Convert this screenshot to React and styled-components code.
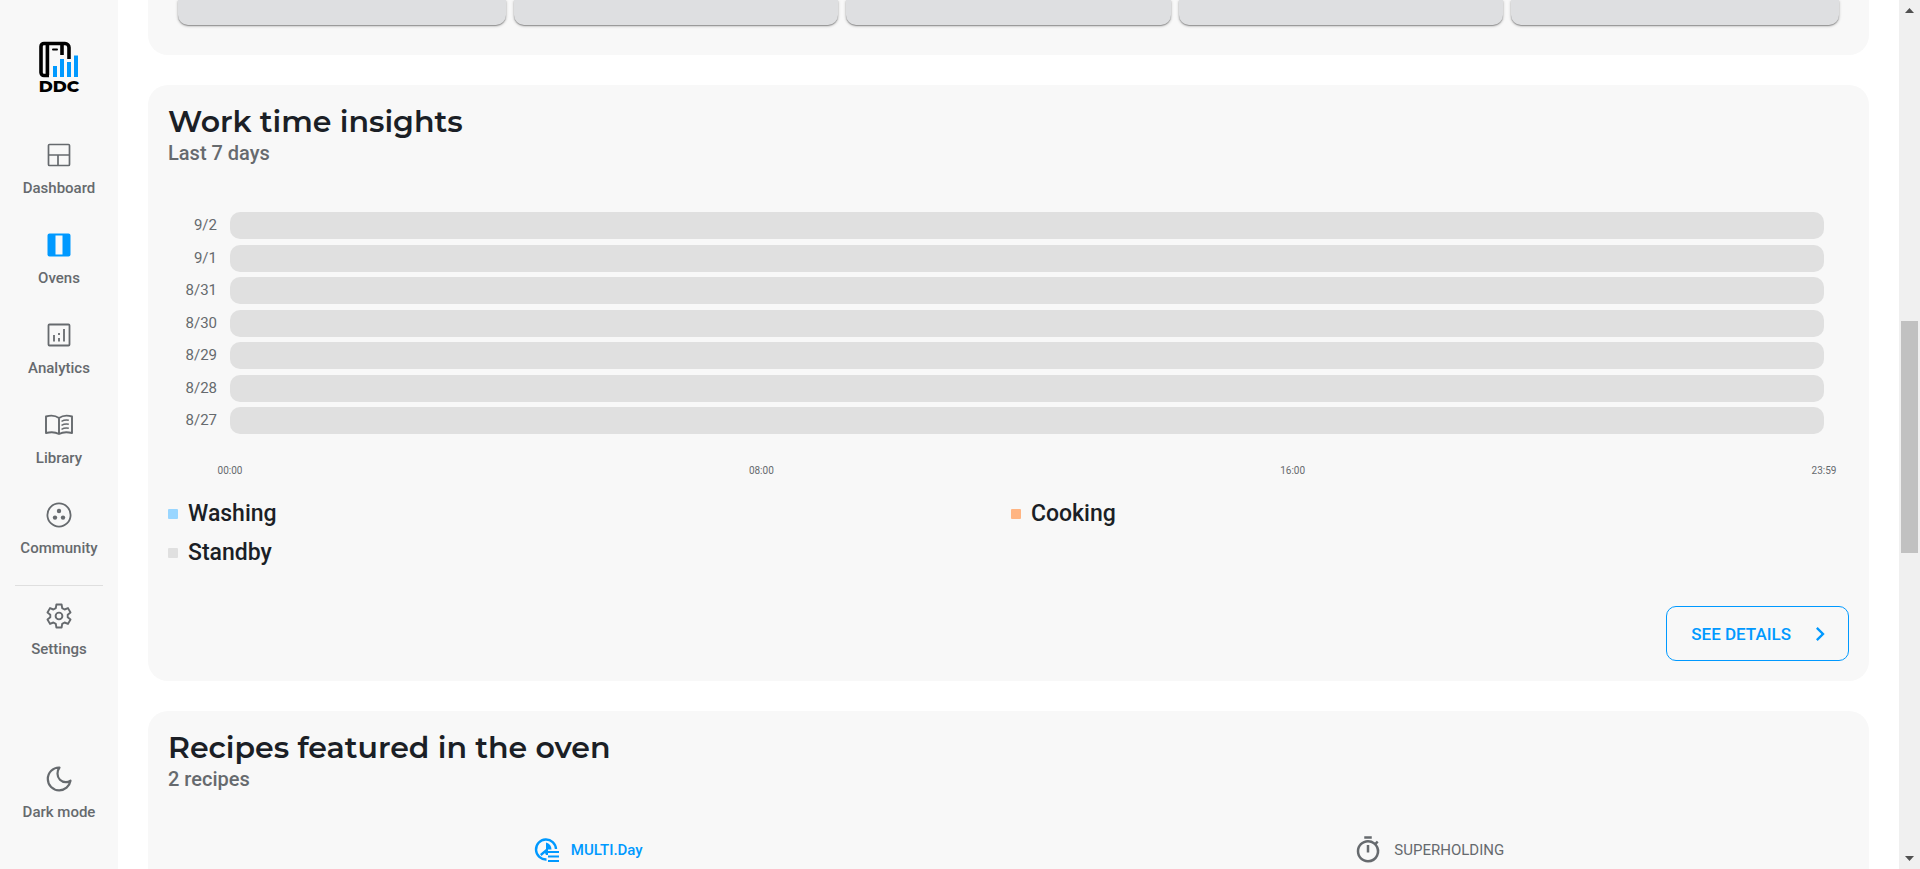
import React, { useState } from 'react';
import styled, { createGlobalStyle } from 'styled-components';
import { MdChevronRight, MdOutlineTimer } from 'react-icons/md';

const GlobalStyle = createGlobalStyle`
  * {
    box-sizing: border-box;
  }

  body {
    margin: 0;
    background: #fff;
    font-family: Roboto, "Liberation Sans", sans-serif;
    color: #1b1f26;
  }
`;

const Shell = styled.div`
  display: grid;
  grid-template-columns: 118px minmax(0, 1fr) 21px;
  height: 100vh;
  overflow: hidden;
`;

/* ---------- sidebar ---------- */

const Sidebar = styled.nav`
  display: flex;
  flex-direction: column;
  align-items: center;
  padding: 40px 15px;
  background: #f8f8f8;
`;

const Logo = styled.svg`
  flex: none;
  width: 42px;
  height: 58px;
  margin-bottom: 42px;
`;

const NavItem = styled.a`
  display: flex;
  flex-direction: column;
  align-items: center;
  gap: 8px;
  height: 90px;
  color: #666a6e;
  font-size: 15px;
  font-weight: 500;
  line-height: 20px;
  text-decoration: none;
  white-space: nowrap;

  svg {
    width: 30px;
    height: 30px;
    color: ${props => (props.$active ? '#0099ff' : '#666a6e')};
  }
`;

const Divider = styled.hr`
  flex: none;
  width: 100%;
  margin: -5px 0 15px;
  border: 0;
  border-top: 1px solid #dfdfdf;
`;

const ModeButton = styled(NavItem).attrs({ as: 'button', type: 'button' })`
  margin-top: auto;
  height: 65px;
  padding: 0;
  border: 0;
  background: none;
  font-family: inherit;
  cursor: pointer;
`;

/* ---------- content ---------- */

const Main = styled.main`
  display: flex;
  flex-direction: column;
  gap: 30px;
  padding: 0 30px;
  overflow: hidden;
`;

const Card = styled.section`
  flex: none;
  padding: 20px;
  border-radius: 20px;
  background: #f8f8f8;
`;

const TilesCard = styled(Card)`
  display: grid;
  grid-template-columns: repeat(5, 1fr);
  padding: 0 30px 30px;
  border-radius: 0 0 20px 20px;
`;

const Tile = styled.div`
  height: 25px;
  margin: 0 4px;
  border-radius: 0 0 10px 10px;
  background: #dedfe1;
  box-shadow: 0 1px 3px rgba(0, 0, 0, .3), 0 1px 1px rgba(0, 0, 0, .25);

  &:first-child {
    margin-left: 0;
  }

  &:last-child {
    margin-right: 0;
  }
`;

const Title = styled.h2`
  margin: 0 0 2px;
  font-family: Montserrat, Inter, sans-serif;
  font-size: 30px;
  font-weight: 600;
  line-height: 33px;
`;

const Subtitle = styled.p`
  margin: 0;
  color: #666a6e;
  font-size: 20px;
  font-weight: 500;
  line-height: 26px;
`;

const Chart = styled.div`
  display: flex;
  flex-direction: column;
  justify-content: space-between;
  height: 222px;
  margin-top: 46px;
  padding-right: 25px;
`;

const DayRow = styled.div`
  display: grid;
  grid-template-columns: 49px 1fr;
  column-gap: 13px;
  align-items: center;
  color: #666a6e;
  font-size: 15px;
  line-height: 27px;
  text-align: right;
`;

const DayBar = styled.div`
  height: 27px;
  border-radius: 10px;
  background: #e0e0e0;
`;

const Axis = styled.div`
  display: flex;
  justify-content: space-between;
  margin-top: 29px;
  padding: 0 5px 0 42px;
  color: #666a6e;
  font-size: 10px;
  line-height: 16px;

  span {
    width: 40px;
    text-align: center;
  }
`;

const Legend = styled.ul`
  display: grid;
  grid-template-columns: 1fr 1fr;
  column-gap: 5px;
  margin: 15px 0 0;
  padding: 0;
  list-style: none;
`;

const LegendItem = styled.li`
  display: flex;
  align-items: center;
  gap: 10px;
  font-size: 23px;
  font-weight: 500;
  line-height: 39px;

  &::before {
    content: '';
    width: 10px;
    height: 10px;
    border-radius: 1px;
    background: ${props => props.$color};
  }
`;

const CardActions = styled.div`
  display: flex;
  justify-content: flex-end;
  margin-top: 34px;
`;

const DetailsButton = styled.button`
  display: flex;
  align-items: center;
  gap: 15px;
  height: 55px;
  padding: 0 14px 0 24px;
  border: 1px solid #0099ff;
  border-radius: 10px;
  background: transparent;
  color: #0099ff;
  font-family: inherit;
  font-size: 17px;
  font-weight: 500;
  cursor: pointer;
`;

const Tabs = styled.div`
  display: grid;
  grid-template-columns: 1fr 1fr;
  margin-top: 30px;
`;

const Tab = styled.button`
  display: flex;
  align-items: center;
  justify-content: center;
  gap: 11px;
  height: 56px;
  padding: 0;
  border: 0;
  background: none;
  color: ${props => (props.$active ? '#0099ff' : '#666a6e')};
  font-family: inherit;
  font-size: 15px;
  font-weight: ${props => (props.$active ? 500 : 400)};
  cursor: pointer;
`;

/* ---------- scroll track ---------- */

const ScrollTrack = styled.div`
  display: grid;
  grid-template-rows: 21px 300fr 232fr 295fr 21px;
  justify-items: center;
  align-items: center;
  background: #f0f0f0;
`;

const ScrollThumb = styled.div`
  grid-row: 3;
  width: 17px;
  height: 100%;
  background: #c1c1c1;
`;

const ScrollArrow = styled.svg`
  grid-row: ${props => (props.$down ? 5 : 1)};
  width: 9px;
  height: 5px;
  fill: #505050;
`;

const StrokeIcon = ({ children, width = 2 }) => (
  <svg viewBox="0 0 30 30" fill="none" stroke="currentColor" strokeWidth={width} strokeLinejoin="round" aria-hidden="true">
    {children}
  </svg>
);

const DashboardIcon = () => (
  <StrokeIcon width={1.7}>
    <rect x="4.5" y="4.5" width="21" height="21" rx="1" />
    <path d="M4.5 15h21M14 15v10.5" />
  </StrokeIcon>
);

const OvensIcon = () => (
  <svg viewBox="0 0 30 30" aria-hidden="true">
    <path
      fill="currentColor"
      fillRule="evenodd"
      d="M5.5 3.5h19a2 2 0 0 1 2 2v19a2 2 0 0 1-2 2h-19a2 2 0 0 1-2-2v-19a2 2 0 0 1 2-2zM11.5 5.5v19h7v-19z"
    />
  </svg>
);

const AnalyticsIcon = () => (
  <StrokeIcon width={1.8}>
    <rect x="4.5" y="4.5" width="21" height="21" rx="1" />
    <path d="M10 15v6.5M15 13v2M15 18v3.5M20 9v12.5" />
  </StrokeIcon>
);

const LibraryIcon = () => (
  <StrokeIcon width={1.9}>
    <path d="M15 8C11.5 5.5 6.5 5.2 2 6.5v16.5c4.5-1.2 9.5-1 13 1 3.5-2 8.5-2.2 13-1V6.500C23.5 5.2 18.5 5.5 15 8zM15 8v16" />
    <path strokeWidth="1.4" d="M17.5 11.3c2.3-1.2 4.7-1.5 7.3-1M17.5 15.3c2.3-1.2 4.7-1.5 7.3-1M17.5 19.3c2.3-1.2 4.7-1.5 7.3-1" />
  </StrokeIcon>
);

const CommunityIcon = () => (
  <StrokeIcon width={1.8}>
    <circle cx="15" cy="15" r="11.6" />
    <g fill="currentColor" stroke="none">
      <circle cx="15" cy="11" r="2.2" />
      <circle cx="11" cy="17.6" r="2.2" />
      <circle cx="19" cy="17.6" r="2.2" />
    </g>
  </StrokeIcon>
);

const SettingsIcon = () => (
  <StrokeIcon width={1.9}>
    <path d="M12.4 3.5h5.2l.6 3.6 2.4 1.4 3.4-1.4 2.5 4.4-2.8 2.2v2.6l2.8 2.2-2.5 4.4-3.4-1.4-2.4 1.4-.6 3.6h-5.2l-.6-3.6-2.4-1.4-3.4 1.4-2.5-4.4 2.8-2.2v-2.6l-2.8-2.2 2.5-4.4 3.4 1.4 2.4-1.4z" />
    <circle cx="15" cy="15" r="3.4" />
  </StrokeIcon>
);

const MoonIcon = () => (
  <StrokeIcon width={2.2}>
    <path d="M15.5 3.5C9 3.2 3.8 8.5 3.8 15c0 6.2 5 11.3 11.4 11.3 5.600 0 10.3-4 11.3-9.6-1.4.9-3 1.4-4.7 1.4-4.6 0-8.3-3.7-8.3-8.3 0-2.4.7-4.6 2-6.3z" />
  </StrokeIcon>
);

const MultiDayIcon = () => (
  <svg width="26" height="26" viewBox="0 0 26 26" fill="none" stroke="currentColor" strokeWidth="2.4" aria-hidden="true">
    <path d="M12.5 22.5A10 10 0 1 1 22 12" />
    <path fill="currentColor" stroke="none" d="M12 5.5a7.5 7.5 0 0 1 5.5 7h-3.500v5.500h-2l-1-2-3.500 3a7 7 0 0 1-1.500-2L12 12z" />
    <path strokeWidth="2" d="M14 15h11M14 19.5h11M14 24h11" />
  </svg>
);

const LogoMark = () => (
  <Logo viewBox="0 0 42 58" role="img" aria-label="DDC">
    <g fill="none" stroke="#000" strokeWidth="3.6">
      <path d="M11 35.5H6a3 3 0 0 1-3-3V6.5a3 3 0 0 1 3-3H27a4 4 0 0 1 4 4v11.5" />
      <path d="M9.4 4v31M24 4v11" />
      <path strokeWidth="2" strokeLinecap="round" d="M15 9.5h4" />
    </g>
    <path fill="#0099ff" d="M15 26h4v11h-4zM22 19h4v18h-4zM29 22h4v15h-4zM36 15.5h4V37h-4z" />
    <text x="21" y="52" textAnchor="middle" fontFamily="Montserrat, Inter, sans-serif" fontSize="17" fontWeight="800" fill="#000">
      DDC
    </text>
  </Logo>
);

const navItems = [
  { name: 'Dashboard', Icon: DashboardIcon },
  { name: 'Ovens', Icon: OvensIcon, active: true },
  { name: 'Analytics', Icon: AnalyticsIcon },
  { name: 'Library', Icon: LibraryIcon },
  { name: 'Community', Icon: CommunityIcon }
];

const days = ['9/2', '9/1', '8/31', '8/30', '8/29', '8/28', '8/27'];
const hours = ['00:00', '08:00', '16:00', '23:59'];
const tiles = [1, 2, 3, 4, 5];

const legend = [
  { label: 'Washing', color: '#99d6ff' },
  { label: 'Cooking', color: '#ffb583' },
  { label: 'Standby', color: '#e0e0e0' }
];

const App = () => {
  const [tab, setTab] = useState('multi');

  return (
    <>
      <GlobalStyle />
      <Shell>
        <Sidebar>
          <LogoMark />
          {navItems.map(({ name, Icon, active }) => (
            <NavItem key={name} href={`#${name.toLowerCase()}`} $active={active}>
              <Icon />
              {name}
            </NavItem>
          ))}
          <Divider />
          <NavItem href="#settings">
            <SettingsIcon />
            Settings
          </NavItem>
          <ModeButton>
            <MoonIcon />
            Dark mode
          </ModeButton>
        </Sidebar>

        <Main>
          <TilesCard>
            {tiles.map(tile => <Tile key={tile} />)}
          </TilesCard>

          <Card>
            <Title>Work time insights</Title>
            <Subtitle>Last 7 days</Subtitle>
            <Chart>
              {days.map(day => (
                <DayRow key={day}>
                  <span>{day}</span>
                  <DayBar />
                </DayRow>
              ))}
            </Chart>
            <Axis>
              {hours.map(hour => <span key={hour}>{hour}</span>)}
            </Axis>
            <Legend>
              {legend.map(({ label, color }) => (
                <LegendItem key={label} $color={color}>{label}</LegendItem>
              ))}
            </Legend>
            <CardActions>
              <DetailsButton type="button">
                SEE DETAILS
                <MdChevronRight size={28} />
              </DetailsButton>
            </CardActions>
          </Card>

          <Card>
            <Title>Recipes featured in the oven</Title>
            <Subtitle>2 recipes</Subtitle>
            <Tabs role="tablist">
              <Tab type="button" role="tab" aria-selected={tab === 'multi'} $active={tab === 'multi'} onClick={() => setTab('multi')}>
                <MultiDayIcon />
                MULTI.Day
              </Tab>
              <Tab type="button" role="tab" aria-selected={tab === 'holding'} $active={tab === 'holding'} onClick={() => setTab('holding')}>
                <MdOutlineTimer size={30} />
                SUPERHOLDING
              </Tab>
            </Tabs>
          </Card>
        </Main>

        <ScrollTrack aria-hidden="true">
          <ScrollArrow viewBox="0 0 9 5"><path d="M0 5h9L4.5 0z" /></ScrollArrow>
          <ScrollThumb />
          <ScrollArrow $down viewBox="0 0 9 5"><path d="M0 0h9L4.5 5z" /></ScrollArrow>
        </ScrollTrack>
      </Shell>
    </>
  );
};

export default App;
